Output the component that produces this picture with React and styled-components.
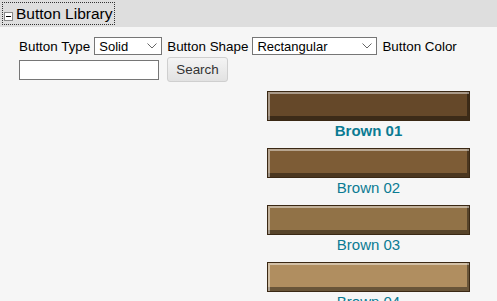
import React, { useState } from "react";
import styled, { createGlobalStyle } from "styled-components";

const Global = createGlobalStyle`
  html, body {
    margin: 0;
    padding: 0;
    background: #f6f6f6;
    font-family: "Liberation Sans", Arial, sans-serif;
    overflow: hidden;
  }
`;

const Header = styled.div`
  height: 27px;
  background: #dedede;
  display: flex;
  align-items: center;
  padding-left: 2px;
`;

const Toggle = styled.button`
  display: flex;
  align-items: center;
  gap: 3px;
  height: 23px;
  padding: 0 1px;
  border: 1px dotted #333;
  background: transparent;
  font-family: inherit;
  font-size: 15.5px;
  color: #000;
  cursor: pointer;
`;

const MinusBox = styled.span`
  width: 9px;
  height: 9px;
  border: 1px solid #888;
  background: #fff;
  box-sizing: border-box;
  position: relative;
  margin-top: 5px;
  &::after {
    content: "";
    position: absolute;
    left: 1px;
    right: 1px;
    top: 3px;
    height: 1px;
    background: #000;
  }
`;

const Toolbar = styled.div`
  display: flex;
  flex-wrap: wrap;
  align-items: center;
  row-gap: 2px;
  width: 462px;
  padding: 10px 0 0 19px;
  font-size: 13.4px;
  color: #000;
`;

const Label = styled.span`
  margin-right: 4px;
`;

const SelectWrap = styled.span`
  position: relative;
  display: inline-flex;
  margin-right: 5px;
`;

const Select = styled.select`
  appearance: none;
  width: ${(p) => p.$w}px;
  height: 18px;
  box-sizing: border-box;
  font-family: inherit;
  font-size: 13px;
  padding: 0 0 0 4px;
  border: 1px solid #767676;
  border-radius: 0;
  background: #fff;
  color: #000;
  outline: none;
`;

const Chevron = styled.svg`
  position: absolute;
  right: 5px;
  top: 6px;
  pointer-events: none;
`;

const Input = styled.input`
  width: 140px;
  height: 20px;
  box-sizing: border-box;
  border: 1px solid #767676;
  background: #fff;
  margin-right: 8px;
`;

const SearchButton = styled.button`
  width: 61px;
  height: 25px;
  border: 1px solid #cfcfcf;
  border-radius: 3px;
  background: linear-gradient(#f4f4f4, #e2e2e2);
  font-family: inherit;
  font-size: 13.4px;
  color: #333;
`;

const List = styled.div`
  display: flex;
  flex-direction: column;
  align-items: center;
  width: 203px;
  margin: 9px 0 0 267px;
`;

const Item = styled.div`
  display: flex;
  flex-direction: column;
  align-items: center;
  margin-bottom: 8px;
`;

const Swatch = styled.div`
  width: 203px;
  height: 30px;
  box-sizing: border-box;
  background: ${(p) => p.$color};
  border: 1px solid #3a2814;
  box-shadow: inset 2px 2px 0 rgba(255, 255, 255, 0.45),
    inset -2px -4px 0 rgba(0, 0, 0, 0.4);
`;

const Name = styled.span`
  font-size: 15px;
  line-height: 19px;
  color: #0b7b93;
  font-weight: ${(p) => (p.$active ? "bold" : "normal")};
`;

const colors = [
  ["Brown 01", "#654829"],
  ["Brown 02", "#7d5c36"],
  ["Brown 03", "#917247"],
  ["Brown 04", "#b08e60"],
];

const Dropdown = ({ width, options }) => (
  <SelectWrap>
    <Select $w={width} defaultValue={options[0]}>
      {options.map((o) => (
        <option key={o}>{o}</option>
      ))}
    </Select>
    <Chevron width="10" height="6" viewBox="0 0 10 6">
      <path d="M0.5 0.5 L5 5 L9.5 0.5" fill="none" stroke="#666" strokeWidth="1" />
    </Chevron>
  </SelectWrap>
);

export default function App() {
  const [selected, setSelected] = useState(0);
  return (
    <>
      <Global />
      <Header>
        <Toggle>
          <MinusBox />
          Button Library
        </Toggle>
      </Header>
      <Toolbar>
        <Label>Button Type</Label>
        <Dropdown width={68} options={["Solid", "Gradient"]} />
        <Label>Button Shape</Label>
        <Dropdown width={125} options={["Rectangular", "Rounded"]} />
        <Label>Button Color</Label>
        <Input type="text" />
        <SearchButton>Search</SearchButton>
      </Toolbar>
      <List>
        {colors.map(([name, c], i) => (
          <Item key={name} onClick={() => setSelected(i)}>
            <Swatch $color={c} />
            <Name $active={selected === i}>{name}</Name>
          </Item>
        ))}
      </List>
    </>
  );
}
